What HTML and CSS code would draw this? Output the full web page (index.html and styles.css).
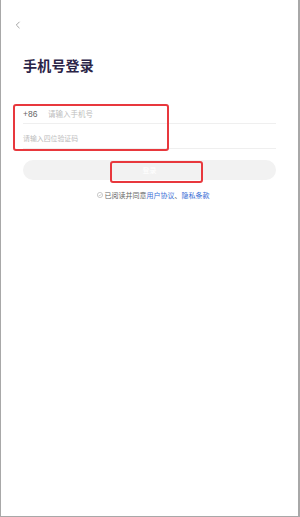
FILE: index.html
```html
<!DOCTYPE html>
<html lang="zh">
<head>
<meta charset="utf-8">
<link rel="stylesheet" href="styles.css">
</head>
<body>
<div class="frame">
  <div class="topbar">
    <svg class="back" width="6" height="8" viewBox="0 0 6 8"><path d="M4.5 0.8 L1.3 4 L4.5 7.2" fill="none" stroke="#9a9a9a" stroke-width="0.9"/></svg>
  </div>
  <h1 class="title">手机号登录</h1>
  <div class="form">
    <div class="row phone"><span class="code">+86</span><span class="ph">请输入手机号</span></div>
    <div class="row verify"><span class="ph small">请输入四位验证码</span></div>
    <div class="btn">登录</div>
    <div class="agree">
      <svg class="check" width="6" height="6" viewBox="0 0 6 6"><circle cx="3" cy="3" r="2.6" fill="none" stroke="#aaa" stroke-width="0.6"/><path d="M1.8 3 L2.7 3.9 L4.3 2.2" fill="none" stroke="#aaa" stroke-width="0.6"/></svg>
      <span>已阅读并同意</span><span class="link">用户协议</span><span>、</span><span class="link">隐私条款</span>
    </div>
    <div class="mark mark-inputs"></div>
    <div class="mark mark-btn"></div>
  </div>
</div>
</body>
</html>
```

FILE: styles.css
```css
* { box-sizing: border-box; margin: 0; padding: 0; }
html, body { background: #fff; }
body { font-family: "Noto Sans CJK SC", "Noto Sans", sans-serif; }
.frame {
  width: 300px; height: 517px;
  border-left: 1px solid #a8a8a8;
  border-right: 2px solid #a8a8a8;
  border-bottom: 1px solid #a8a8a8;
  display: flex; flex-direction: column;
  position: relative;
}
.topbar { height: 29px; padding: 21px 0 0 14px; }
.back { display: block; }
.title {
  margin: 26px 0 0 22px;
  font-size: 14px; line-height: 20px; font-weight: 700;
  color: #2b2447; letter-spacing: 0.2px;
}
.form { position: relative; margin: 29px 22px 0 22px; display: flex; flex-direction: column; }
.row { display: flex; align-items: center; border-bottom: 1px solid #efefef; }
.phone { height: 20px; }
.verify { height: 25px; padding-top: 4px; }
.code { font-family: "Liberation Sans", sans-serif; font-size: 8.5px; color: #666; width: 25px; }
.ph { font-size: 7.5px; color: #bdbdbd; }
.ph.small { font-size: 6.9px; }
.btn {
  margin-top: 11px; height: 20px; border-radius: 10px;
  background: #f2f2f2; color: #fff;
  font-size: 7px; display: flex; align-items: center; justify-content: center;
}
.agree {
  margin-top: 10px; height: 10px; padding-left: 7px;
  display: flex; align-items: center; justify-content: center;
  font-size: 7px; color: #666;
}
.check { margin-right: 2px; }
.link { color: #3b6fd6; }
.mark { position: absolute; border: 2px solid #e8383d; border-radius: 3px; }
.mark-inputs { left: -10px; top: 0; width: 156px; height: 47px; }
.mark-btn { left: 87px; top: 57px; width: 93px; height: 22px; }
```
